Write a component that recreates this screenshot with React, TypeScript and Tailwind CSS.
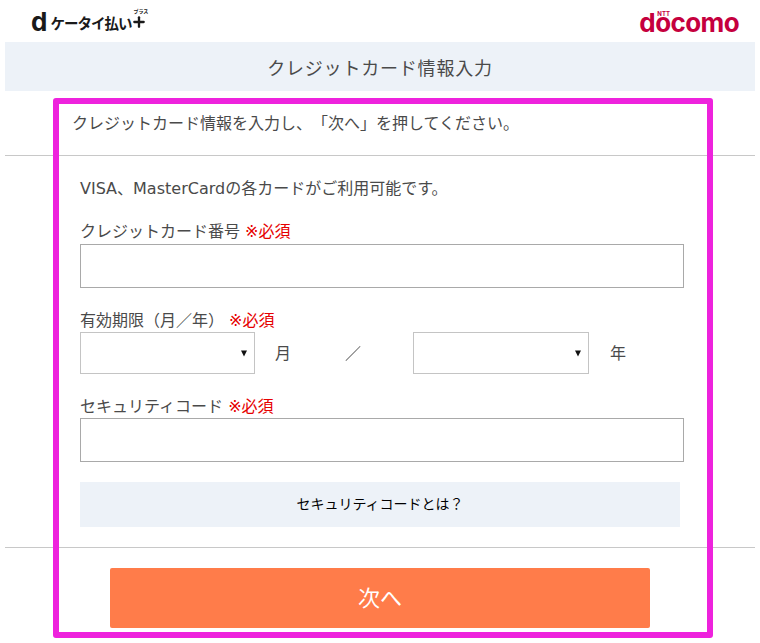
import { Plus } from 'lucide-react';

function Label({ text }: { text: string }) {
  return (
    <div className="pt-[2px] text-[16px] leading-[22px] text-[#4a4a4a]">
      {text} <span className="text-[#e60000]">※必須</span>
    </div>
  );
}

function SelectBox({ width }: { width: string }) {
  return (
    <div className={`${width} h-[42px] border border-[#c4c4c4] bg-white flex items-center justify-end pr-[7px]`}>
      <svg width="6" height="7" viewBox="0 0 6 7">
        <path d="M0 0.5H6L3 6.5Z" fill="#111" />
      </svg>
    </div>
  );
}

export default function App() {
  return (
    <div
      className="relative w-[760px] h-[643px] bg-white overflow-hidden [text-spacing-trim:space-all]"
      style={{ fontFamily: '"DejaVu Sans", "Noto Sans CJK JP", sans-serif' }}
    >
      {/* Header */}
      <header className="h-[42px] flex items-start justify-between pl-[31px] pr-[21px]">
        <div className="flex items-center text-[#1a1a1a] mt-[12px]">
          <span className="text-[26px] leading-[20px] font-bold mr-[3px]" style={{ fontFamily: '"Inter", sans-serif' }}>d</span>
          <span className="mt-[2px] text-[14.5px] leading-none font-bold tracking-[-1px]" style={{ fontFamily: '"Noto Sans CJK JP", sans-serif' }}>ケータイ払い</span>
          <div className="relative -mt-[1px]">
            <Plus className="w-[16px] h-[16px]" strokeWidth={3.5} />
            <span className="absolute top-[-6px] left-[2px] text-[5px] leading-none font-bold whitespace-nowrap" style={{ fontFamily: '"Noto Sans CJK JP", sans-serif' }}>プラス</span>
          </div>
        </div>
        <div className="relative mt-[10px] text-[#c5003e] text-[26px] leading-[26px] font-bold tracking-[-0.6px]" style={{ fontFamily: '"Inter", sans-serif' }}>
          docomo
          <span className="absolute top-[1px] left-[18px] text-[6px] leading-none font-bold tracking-normal">NTT</span>
        </div>
      </header>

      {/* Title */}
      <div className="mx-[5px] h-[49px] pt-[3px] bg-[#edf2f8] flex items-center justify-center text-[18px] tracking-[0.8px] text-[#4a4a4a]">
        クレジットカード情報入力
      </div>

      <p className="h-[64px] pl-[72px] pt-[21px] text-[16px] leading-[24px] text-[#4a4a4a]">
        クレジットカード情報を入力し、「次へ」を押してください。
      </p>
      <hr className="mx-[5px] border-[#c8c8c8]" />

      {/* Form */}
      <div className="pl-[80px] pr-[76px]">
        <p className="mt-[21px] text-[16px] leading-[24px] text-[#4a4a4a]">VISA、MasterCardの各カードがご利用可能です。</p>
        <div className="mt-[18px]">
          <Label text="クレジットカード番号" />
        </div>
        <div className="h-[44px] mt-[1px] border border-[#a9a9a9] bg-white" />

        <div className="mt-[20px]">
          <Label text="有効期限（月／年）" />
        </div>
        <div className="flex items-center text-[16px] text-[#4a4a4a]">
          <SelectBox width="w-[175px]" />
          <span className="ml-[20px] w-[70px] pt-[2px]">月</span>
          <span className="w-[68px] pt-[2px] transform-gpu">／</span>
          <SelectBox width="w-[176px]" />
          <span className="ml-[21px] pt-[2px]">年</span>
        </div>

        <div className="mt-[20px]">
          <Label text="セキュリティコード" />
        </div>
        <div className="h-[44px] border border-[#a9a9a9] bg-white" />

        <div className="mt-[20px] w-[600px] h-[45px] bg-[#edf2f8] flex items-center justify-center text-[14px] text-black">
          セキュリティコードとは？
        </div>
      </div>

      <hr className="mx-[5px] mt-[20px] border-[#c8c8c8]" />

      <div className="mt-[20px] mx-[110px] w-[540px] h-[60px] rounded-[2px] bg-[#ff7c4a] flex items-center justify-center text-[22px] text-white">
        次へ
      </div>

      {/* Highlight frame */}
      <div className="absolute left-[53px] top-[98px] w-[660px] h-[540px] border-[6px] border-[#ee22dd] rounded-[3px] pointer-events-none" />
    </div>
  );
}
